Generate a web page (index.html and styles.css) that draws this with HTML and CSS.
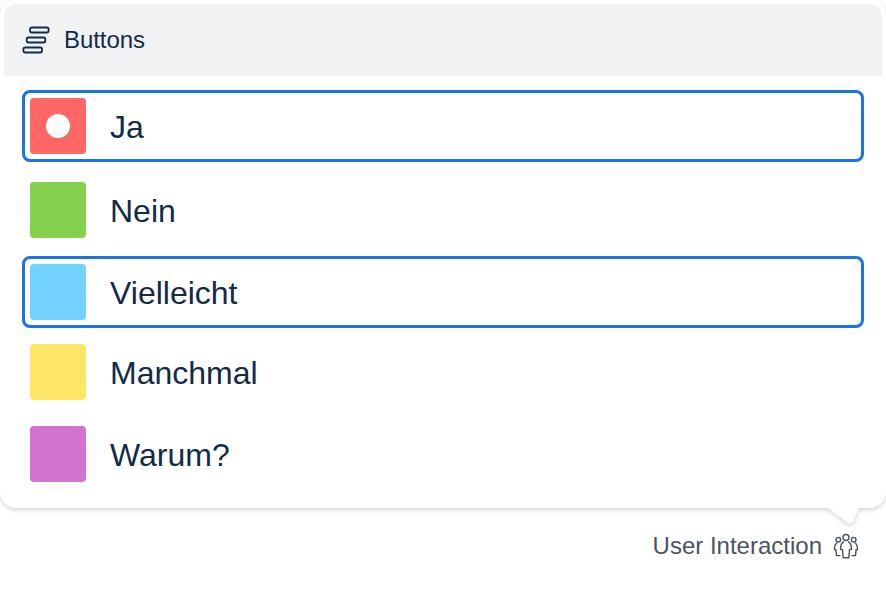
FILE: index.html
```html
<!DOCTYPE html>
<html lang="de">
<head>
<meta charset="utf-8">
<title>Buttons</title>
<link rel="stylesheet" href="styles.css">
</head>
<body>
<main class="card">
  <header class="card-header">
    <svg class="list-icon" width="28" height="28" viewBox="0 0 28 28" fill="none" stroke="currentColor" stroke-width="1.8">
      <rect x="8" y="1.5" width="18.6" height="5" rx="1.7"/>
      <rect x="4.7" y="11.5" width="18.6" height="5" rx="1.7"/>
      <rect x="1.4" y="21.5" width="18.6" height="5" rx="1.7"/>
    </svg>
    <h1 class="title">Buttons</h1>
  </header>
  <ul class="options">
    <li class="option selected"><span class="swatch red"><span class="dot"></span></span><span class="label">Ja</span></li>
    <li class="option"><span class="swatch green"></span><span class="label">Nein</span></li>
    <li class="option selected"><span class="swatch blue"></span><span class="label">Vielleicht</span></li>
    <li class="option"><span class="swatch yellow"></span><span class="label">Manchmal</span></li>
    <li class="option"><span class="swatch purple"></span><span class="label">Warum?</span></li>
  </ul>
  <svg class="tail" width="40" height="26" viewBox="0 0 40 26"><path d="M0 0H40V4H35L30 16Q27.5 22 22.5 18.2L4 4H0Z" fill="#fff"/></svg>
</main>
<footer class="footer">
  <span>User Interaction</span>
  <svg class="people-icon" width="26" height="26" viewBox="0 0 26 26" fill="none" stroke="currentColor" stroke-width="1.4" stroke-linejoin="round" stroke-linecap="round">
    <circle cx="13" cy="4.5" r="3"/>
    <circle cx="5.3" cy="6.7" r="2.3"/>
    <circle cx="20.7" cy="6.7" r="2.3"/>
    <path d="M10.6 9C8.6 9.7 7.5 12.3 7.5 16.4H9.4L10.2 24.7H15.8L16.6 16.4H18.5C18.5 12.3 17.4 9.7 15.4 9"/>
    <path d="M3.8 10.2C2.2 11 1.5 13.2 1.5 16.6H2.9L3.5 22.6H6.9"/>
    <path d="M22.2 10.2C23.8 11 24.5 13.2 24.5 16.6H23.1L22.5 22.6H19.1"/>
  </svg>
</footer>
</body>
</html>
```
FILE: styles.css
```css
* { box-sizing: border-box; }

body {
  margin: 0;
  height: 598px;
  overflow: hidden;
  background: #fff;
  color: #122b46;
  font-family: "Liberation Sans", Arial, sans-serif;
}

.card {
  position: relative;
  height: 508px;
  padding: 4px;
  border-radius: 16px;
  background: #fff;
  filter: drop-shadow(0 2px 2px rgba(30, 45, 75, 0.2));
}

.card-header {
  display: flex;
  align-items: center;
  gap: 14px;
  height: 72px;
  padding: 0 18px;
  border-radius: 12px 12px 0 0;
  background: #f1f2f4;
}

.title {
  margin: 0;
  font-size: 24px;
  font-weight: 400;
  line-height: 28px;
  letter-spacing: -0.05px;
}

.options {
  display: flex;
  flex-direction: column;
  margin: 0;
  padding: 14px 18px 0;
  list-style: none;
}

.option {
  display: flex;
  align-items: center;
  gap: 24px;
  height: 72px;
  margin-bottom: 10px;
  padding: 0 5px;
  border: 3px solid transparent;
  border-radius: 8px;
}

.option.selected { border-color: #1a73e8; }
.option.selected:first-child { margin-bottom: 12px; }
.option.selected:not(:first-child) { margin-bottom: 8px; }

.swatch {
  display: flex;
  align-items: center;
  justify-content: center;
  width: 56px;
  height: 56px;
  border-radius: 4px;
}

.red { background: #ff6666; }
.green { background: #85d14d; }
.blue { background: #73d2ff; }
.yellow { background: #ffe666; }
.purple { background: #d472d0; }

.dot {
  width: 24px;
  height: 24px;
  border-radius: 50%;
  background: #fff;
}

.label {
  padding-top: 2px;
  font-size: 32px;
  line-height: 36px;
}

.tail {
  position: absolute;
  top: 504px;
  left: 824px;
}

.footer {
  display: flex;
  align-items: center;
  justify-content: flex-end;
  gap: 11px;
  padding: 24px 27px 0 0;
  color: #4b535c;
  font-size: 24px;
  line-height: 28px;
}
```
